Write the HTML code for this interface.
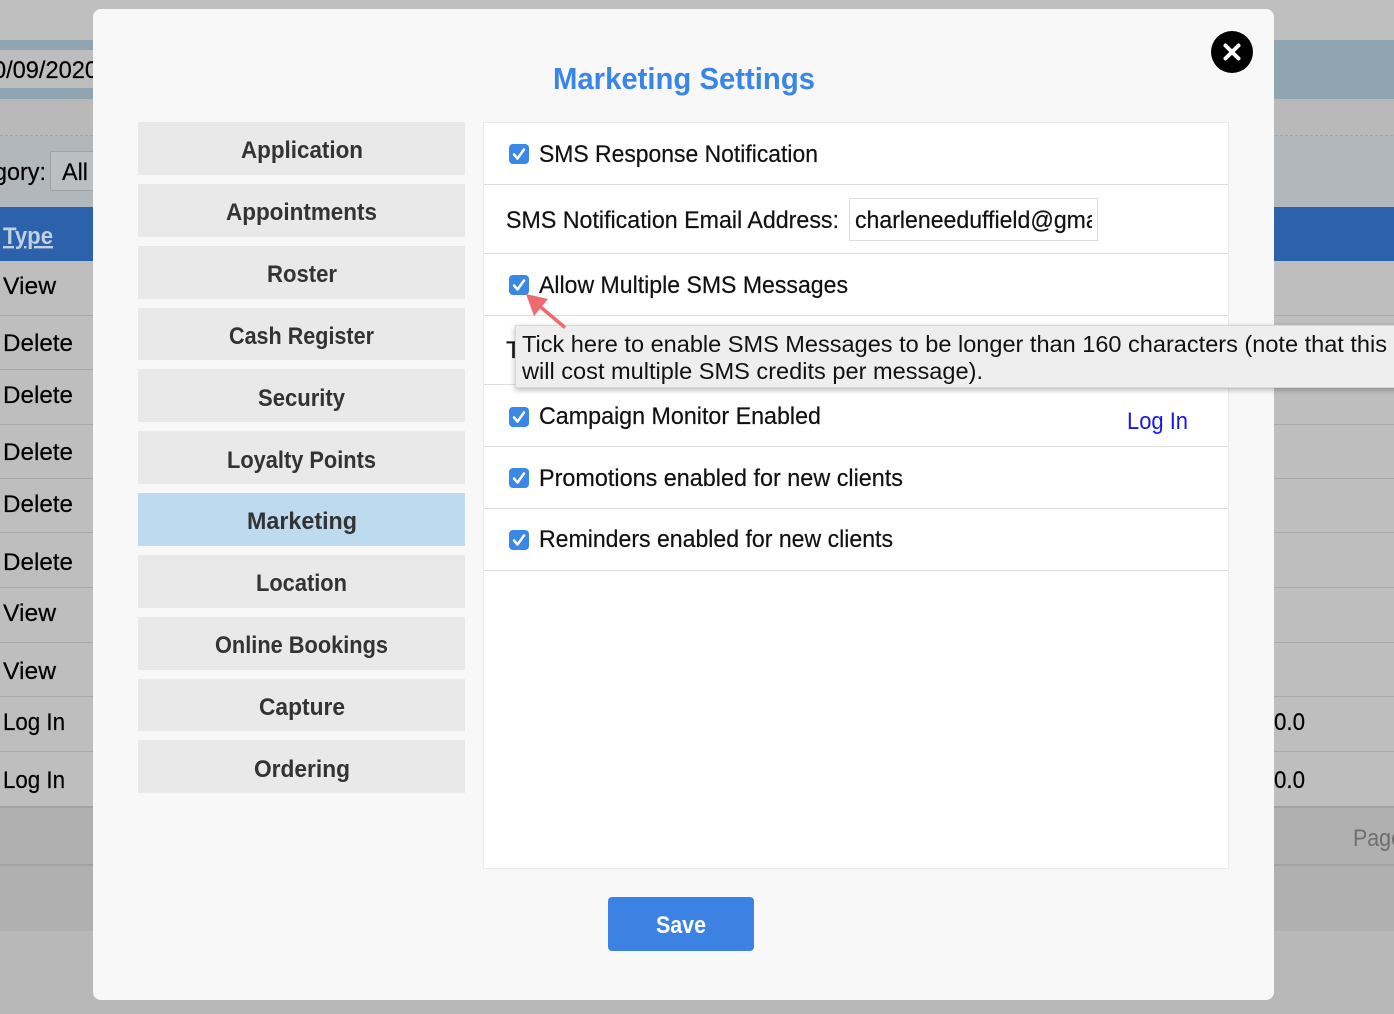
<!DOCTYPE html>
<html lang="en">
<head>
<meta charset="utf-8">
<title>Marketing Settings</title>
<style>
html,body{margin:0;padding:0;width:1394px;height:1014px;overflow:hidden;background:#bbb}
svg{display:block;position:absolute;left:0;top:0}
text{font-family:"Liberation Sans",Arial,sans-serif;white-space:pre}
.b{font-size:24px;fill:#000;stroke:#000;stroke-width:.2}
.side{font-size:24.5px;font-weight:bold;fill:#333;}
.m{font-size:24.5px;fill:#111;stroke:#111;stroke-width:.2}
.tip{font-size:23px;fill:#111}
</style>
</head>
<body>
<svg width="1394" height="1014" viewBox="0 0 1394 1014" xmlns="http://www.w3.org/2000/svg">
<defs>
<linearGradient id="bg" x1="0" y1="0" x2="0" y2="1"><stop offset="0" stop-color="#bfbfbf"/><stop offset="1" stop-color="#b8b8b8"/></linearGradient>
<filter id="sh" x="-5%" y="-30%" width="110%" height="170%"><feDropShadow dx="0" dy="2" stdDeviation="3" flood-color="#000" flood-opacity=".28"/></filter>
<clipPath id="inp"><rect x="851" y="199" width="241" height="41"/></clipPath>
</defs>

<!-- dimmed page -->
<rect width="1394" height="1014" fill="url(#bg)"/>
<rect y="40" width="1394" height="59" fill="#90a4b2"/>
<rect y="50" width="93" height="38" fill="#bdbdbd"/>
<rect y="99" width="1394" height="37" fill="#b9b9b9"/>
<line x1="0" y1="135.500" x2="1394" y2="135.500" stroke="#a4a4a4" stroke-dasharray="3 2"/>
<rect y="136" width="1394" height="71" fill="#b2b7bb"/>
<rect x="50.500" y="151.500" width="60" height="39" fill="#bcbfc2" stroke="#a0a3a6"/>
<rect y="207" width="1394" height="54" fill="#2b62ab"/>
<rect y="261" width="1394" height="546" fill="#bebebe"/>
<g fill="#a9a9a9">
<rect y="315" width="1394" height="1"/><rect y="369" width="1394" height="1"/><rect y="424" width="1394" height="1"/><rect y="478" width="1394" height="1"/><rect y="532" width="1394" height="1"/><rect y="587" width="1394" height="1"/><rect y="642" width="1394" height="1"/><rect y="696" width="1394" height="1"/><rect y="751" width="1394" height="1"/>
</g>
<rect y="807" width="1394" height="124" fill="#b0b0b0"/>
<rect y="806" width="1394" height="2" fill="#a2a2a2"/>
<rect y="864" width="1394" height="2" fill="#a2a2a2"/>

<text x="-7" y="78" class="b" textLength="105" lengthAdjust="spacingAndGlyphs">0/09/2020</text>
<text x="-6" y="180" class="b" textLength="52" lengthAdjust="spacingAndGlyphs">gory:</text>
<text x="62" y="180" class="b" textLength="26" lengthAdjust="spacingAndGlyphs">All</text>
<text x="3" y="244" font-size="24" font-weight="bold" fill="#c3d0e2" text-decoration="underline" textLength="50" lengthAdjust="spacingAndGlyphs">Type</text>
<text x="3" y="294" class="b" textLength="53" lengthAdjust="spacingAndGlyphs">View</text>
<text x="3" y="351" class="b" textLength="70" lengthAdjust="spacingAndGlyphs">Delete</text>
<text x="3" y="403" class="b" textLength="70" lengthAdjust="spacingAndGlyphs">Delete</text>
<text x="3" y="460" class="b" textLength="70" lengthAdjust="spacingAndGlyphs">Delete</text>
<text x="3" y="512" class="b" textLength="70" lengthAdjust="spacingAndGlyphs">Delete</text>
<text x="3" y="570" class="b" textLength="70" lengthAdjust="spacingAndGlyphs">Delete</text>
<text x="3" y="621" class="b" textLength="53" lengthAdjust="spacingAndGlyphs">View</text>
<text x="3" y="679" class="b" textLength="53" lengthAdjust="spacingAndGlyphs">View</text>
<text x="3" y="730" class="b" textLength="62" lengthAdjust="spacingAndGlyphs">Log In</text>
<text x="3" y="788" class="b" textLength="62" lengthAdjust="spacingAndGlyphs">Log In</text>
<text x="1274" y="730" class="b" textLength="31" lengthAdjust="spacingAndGlyphs">0.0</text>
<text x="1274" y="788" class="b" textLength="31" lengthAdjust="spacingAndGlyphs">0.0</text>
<text x="1353" y="846" font-size="24" fill="#6e6e6e" textLength="50" lengthAdjust="spacingAndGlyphs">Page</text>

<!-- modal -->
<rect x="93" y="9" width="1181" height="991" rx="8" fill="#f8f8f8"/>
<text x="553" y="89" font-size="31" font-weight="bold" fill="#3a86e6" textLength="262" lengthAdjust="spacingAndGlyphs">Marketing Settings</text>

<circle cx="1232" cy="52" r="21" fill="#000"/>
<path d="M1225.500 45.500L1238.500 58.500M1238.500 45.500L1225.500 58.500" stroke="#fff" stroke-width="4" stroke-linecap="round"/>

<!-- side menu -->
<g fill="#e9e9e9">
<rect x="138" y="122" width="327" height="53"/>
<rect x="138" y="184" width="327" height="53"/>
<rect x="138" y="246" width="327" height="53"/>
<rect x="138" y="308" width="327" height="52"/>
<rect x="138" y="369" width="327" height="53"/>
<rect x="138" y="431" width="327" height="53"/>
<rect x="138" y="493" width="327" height="53" fill="#bedaee"/>
<rect x="138" y="555" width="327" height="53"/>
<rect x="138" y="617" width="327" height="53"/>
<rect x="138" y="679" width="327" height="52"/>
<rect x="138" y="740" width="327" height="53"/>
</g>
<text x="241" y="158" class="side" textLength="122" lengthAdjust="spacingAndGlyphs">Application</text>
<text x="226" y="220" class="side" textLength="151" lengthAdjust="spacingAndGlyphs">Appointments</text>
<text x="267" y="282" class="side" textLength="70" lengthAdjust="spacingAndGlyphs">Roster</text>
<text x="229" y="344" class="side" textLength="145" lengthAdjust="spacingAndGlyphs">Cash Register</text>
<text x="258" y="406" class="side" textLength="87" lengthAdjust="spacingAndGlyphs">Security</text>
<text x="227" y="468" class="side" textLength="149" lengthAdjust="spacingAndGlyphs">Loyalty Points</text>
<text x="247" y="529" class="side" textLength="110" lengthAdjust="spacingAndGlyphs">Marketing</text>
<text x="256" y="591" class="side" textLength="91" lengthAdjust="spacingAndGlyphs">Location</text>
<text x="215" y="653" class="side" textLength="173" lengthAdjust="spacingAndGlyphs">Online Bookings</text>
<text x="259" y="715" class="side" textLength="86" lengthAdjust="spacingAndGlyphs">Capture</text>
<text x="254" y="777" class="side" textLength="96" lengthAdjust="spacingAndGlyphs">Ordering</text>

<!-- panel -->
<rect x="483.500" y="122.500" width="745" height="746" fill="#fff" stroke="#ebebeb"/>
<g fill="#dcdcdc">
<rect x="484" y="184" width="744" height="1"/><rect x="484" y="253" width="744" height="1"/><rect x="484" y="315" width="744" height="1"/><rect x="484" y="384" width="744" height="1"/><rect x="484" y="446" width="744" height="1"/><rect x="484" y="508" width="744" height="1"/><rect x="484" y="570" width="744" height="1"/>
</g>

<g id="cb">
<rect x="509" y="144" width="20" height="20" rx="4" fill="#3b87e6"/>
<path d="M514 154.500L517.500 158.500L524 149.500" fill="none" stroke="#fff" stroke-width="2.500" stroke-linecap="round" stroke-linejoin="round"/>
</g>
<use href="#cb" y="131"/>
<use href="#cb" y="263"/>
<use href="#cb" y="324"/>
<use href="#cb" y="386"/>

<text x="539" y="162" class="m" textLength="279" lengthAdjust="spacingAndGlyphs">SMS Response Notification</text>
<text x="506" y="228" class="m" textLength="333" lengthAdjust="spacingAndGlyphs">SMS Notification Email Address:</text>
<rect x="849.500" y="198.500" width="248" height="42" fill="#fff" stroke="#dcdcdc"/>
<g clip-path="url(#inp)"><text x="855" y="228" class="m" textLength="254" lengthAdjust="spacingAndGlyphs">charleneeduffield@gmail</text></g>
<text x="539" y="293" class="m" textLength="309" lengthAdjust="spacingAndGlyphs">Allow Multiple SMS Messages</text>
<text x="506" y="358" class="m">T</text>
<text x="539" y="424" class="m" textLength="282" lengthAdjust="spacingAndGlyphs">Campaign Monitor Enabled</text>
<text x="1127" y="429" font-size="24.500" fill="#1818e8" textLength="61" lengthAdjust="spacingAndGlyphs">Log In</text>
<text x="539" y="486" class="m" textLength="364" lengthAdjust="spacingAndGlyphs">Promotions enabled for new clients</text>
<text x="539" y="547" class="m" textLength="354" lengthAdjust="spacingAndGlyphs">Reminders enabled for new clients</text>

<!-- save -->
<rect x="608" y="897" width="146" height="54" rx="4" fill="#3b82e2"/>
<text x="656" y="933" font-size="24.500" font-weight="bold" fill="#fff" textLength="50" lengthAdjust="spacingAndGlyphs">Save</text>

<!-- tooltip -->
<rect x="515.500" y="325.500" width="890" height="62" fill="#eeeeee" stroke="#d8d8d8" filter="url(#sh)"/>
<text x="522" y="352" class="tip" textLength="865" lengthAdjust="spacingAndGlyphs">Tick here to enable SMS Messages to be longer than 160 characters (note that this</text>
<text x="522" y="379" class="tip" textLength="461" lengthAdjust="spacingAndGlyphs">will cost multiple SMS credits per message).</text>

<!-- arrow -->
<path d="M565 327.500L537 304" stroke="#ee6a6f" stroke-width="3.500" fill="none"/>
<path d="M526 294L548 299L534 316Z" fill="#ee6a6f"/>
</svg>
</body>
</html>
